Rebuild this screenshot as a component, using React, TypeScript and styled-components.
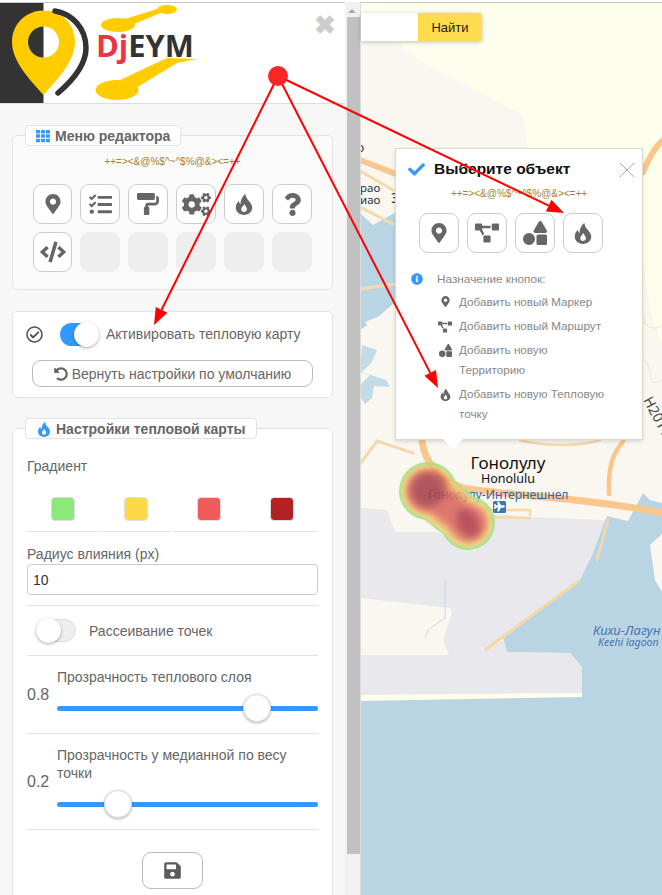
import React from "react";
import styled, { createGlobalStyle } from "styled-components";
import {
  FaMapMarkerAlt, FaTasks, FaPaintRoller, FaCogs, FaQuestion, FaCode, FaTh,
  FaUndoAlt, FaSave, FaCheck, FaInfoCircle, FaProjectDiagram, FaShapes, FaRegCheckCircle, FaPlane,
} from "react-icons/fa";

const Global = createGlobalStyle`
  html, body { margin: 0; padding: 0; background: #fff; }
  * { box-sizing: border-box; }
  body { font-family: "Liberation Sans", Arial, sans-serif; }
`;

const Page = styled.div`
  position: relative; width: 662px; height: 895px; overflow: hidden;
  display: flex; border-top: 2px solid #fff;
`;
const Panel = styled.aside`
  width: 345px; flex: none; background: #f7f7f7; border-top: 1px solid #c8c8c8;
  display: flex; flex-direction: column; color: #666;
`;
const Header = styled.header`
  position: relative; height: 101px; flex: none; background: #fff; border-bottom: 1px solid #ddd;
  display: flex;
`;
const CloseBig = styled.span`
  position: absolute; top: 10px; right: 9px; font: bold 26px/25px "Liberation Sans", sans-serif; color: #ccc;
`;
const Field = styled.fieldset`
  margin: 0 12px; padding: 0 14px; min-width: 0; width: 321px;
  border: 1px solid #e3e3e3; border-radius: 5px; background: #fafafa;
`;
const MenuField = styled(Field)`
  margin-top: 21px; height: 165px; flex: none;
`;
const Legend = styled.legend`
  margin-left: -2px; padding: 0 10px; height: 21px; background: #fff;
  border: 1px solid #e3e3e3; border-radius: 4px;
  display: flex; align-items: center; gap: 5px; white-space: nowrap;
  font-size: 14px; font-weight: bold; color: #666;
  svg { color: #3399ff; }
`;
const SettingsLegend = styled(Legend)`
  gap: 4px;
`;
const Symbols = styled.div`
  font-size: 10px; line-height: 12px; color: #a8822d; text-align: center; white-space: nowrap;
`;
const MenuSymbols = styled(Symbols)`
  margin: 10px 0 0; height: 28px;
`;
const ButtonGrid = styled.div`
  display: grid; grid-template-columns: 39px repeat(5, 40px); gap: 8px; margin: 0 0 0 6px;
`;
const IconButton = styled.button`
  width: 100%; height: 40px; padding: 0; background: #fff; border: 1px solid #ccc; border-radius: 9px;
  display: flex; align-items: center; justify-content: center; color: #666;
`;
const EmptyButton = styled.div`
  height: 40px; background: #eee; border-radius: 9px;
`;
const ActivateField = styled(Field)`
  margin-top: 21px; background: #fff; padding: 0 19px 10px; height: 87px; flex: none;
`;
const ActivateRow = styled.div`
  display: flex; align-items: center; height: 44px; color: #666; font-size: 14px;
  svg { color: #555; margin-left: -6px; }
`;
const Track = styled.span<{ $on?: boolean }>`
  position: relative; display: block; flex: none; height: 23px; border-radius: 12px;
  width: ${(p) => (p.$on ? "38px" : "40px")};
  background: ${(p) => (p.$on ? "#3399ff" : "#eee")};
  border: ${(p) => (p.$on ? "none" : "1px solid #ddd")};
`;
const Knob = styled.span<{ $on?: boolean }>`
  position: absolute; top: ${(p) => (p.$on ? "-1px" : "-2px")};
  ${(p) => (p.$on ? "right: -1px;" : "left: -1px;")}
  width: 25px; height: 25px; border-radius: 50%; background: #fff;
  box-shadow: 0 1px 3px rgba(0,0,0,.35);
`;
const ActivateLabel = styled.span`
  margin-left: 8px; white-space: nowrap;
`;
const ActivateTrack = styled(Track)`
  margin-left: 17px;
`;
const ResetButton = styled.button`
  display: flex; align-items: center; justify-content: center; gap: 4px;
  width: 281px; height: 27px; margin: 4px 0 0 0; padding: 0; background: #fff;
  border: 1px solid #bbb; border-radius: 9px; font: 14px "Liberation Sans", sans-serif; color: #666;
`;
const SettingsField = styled(Field)`
  margin-top: 20px; background: #fff; height: 560px; flex: none;
`;
const PlainLabel = styled.div`
  font-size: 14px; line-height: 20px; color: #666;
`;
const GradientLabel = styled(PlainLabel)`
  margin-top: 17px;
`;
const SwatchRow = styled.div`
  display: grid; grid-template-columns: repeat(4, 71px); gap: 2px;
`;
const SwatchCell = styled.div`
  display: flex; justify-content: center; padding: 21px 0 10px; border-bottom: 1px solid #e3e3e3;
`;
const Swatch = styled.span<{ $c: string }>`
  width: 24px; height: 24px; border-radius: 4px; background: ${(p) => p.$c}; border: 1px solid #ddd;
`;
const RadiusLabel = styled(PlainLabel)`
  margin-top: 13px; line-height: 19px;
`;
const RadiusInput = styled.input`
  display: block; width: 291px; height: 31px; padding: 0 5px; border: 1px solid #ccc; border-radius: 4px;
  font: 14px "Liberation Sans", sans-serif; color: #333; background: #fff;
`;
const ScatterRow = styled.div`
  display: flex; align-items: center; height: 51px; margin-top: 10px; padding: 0 0 0 9px; gap: 13px;
  border-top: 1px solid #e3e3e3; border-bottom: 1px solid #e3e3e3; font-size: 14px;
`;
const SliderRow = styled.div<{ $h: number }>`
  display: grid; grid-template-columns: 28px 261px; column-gap: 2px; height: ${(p) => p.$h}px;
`;
const SliderValue = styled.div`
  display: flex; align-items: center; border-bottom: 1px solid #e3e3e3; font-size: 16px; color: #666;
`;
const SliderMain = styled.div`
  border-bottom: 1px solid #e3e3e3; padding-top: 12px; font-size: 14px; line-height: 18px;
`;
const SliderTrack = styled.div<{ $mt: number }>`
  position: relative; height: 5px; margin-top: ${(p) => p.$mt}px; background: #3399ff; border-radius: 3px;
`;
const SliderThumb = styled.span<{ $x: number }>`
  position: absolute; top: -12px; left: ${(p) => p.$x - 14}px; width: 28px; height: 28px; border-radius: 50%;
  background: #fff; border: 1px solid #ddd; box-shadow: 0 1px 3px rgba(0,0,0,.3);
`;
const SaveRow = styled.div`
  display: flex; justify-content: center; margin-top: 22px;
`;
const SaveButton = styled.button`
  width: 61px; height: 37px; padding: 0; display: flex; align-items: center; justify-content: center;
  background: #fff; border: 1px solid #bbb; border-radius: 9px; color: #5c5c5c;
`;
const ScrollBar = styled.div`
  width: 15px; flex: none; background: #f1f1f1; padding: 15px 0 0 2px; position: relative;
`;
const ScrollThumb = styled.div`
  width: 13px; height: 837px; background: #c1c1c1;
`;
const ScrollArrow = styled.span`
  position: absolute; top: 7px; left: 3px; width: 0; height: 0;
  border-left: 4px solid transparent; border-right: 4px solid transparent; border-bottom: 4px solid #aaa;
`;
const MapArea = styled.main`
  position: relative; flex: 1; min-width: 0; border-left: 1px solid #ddd; border-top: 1px solid #c8c8c8; background: #fefeec;
`;
const MapSvg = styled.svg`
  display: block; position: absolute; left: 0; top: 0; font-family: "Noto Sans", sans-serif;
`;
const Search = styled.div`
  position: absolute; left: 0; top: 10px; display: flex; height: 28px; width: 121px;
  box-shadow: 0 1px 4px rgba(0,0,0,.25); border-radius: 0 3px 3px 0; overflow: hidden;
`;
const SearchInput = styled.div`
  flex: 1; background: #fff;
`;
const SearchBtn = styled.div`
  width: 64px; background: #ffdb4d; color: #222; font-size: 13px; display: flex; align-items: center; justify-content: center;
`;
const Popup = styled.section`
  position: absolute; left: 34px; top: 145px; width: 248px; height: 292px; background: #fff;
  border: 1px solid #ddd8c8; box-shadow: 0 2px 4px rgba(0,0,0,.12);
  &::after {
    content: ""; position: absolute; left: 47px; top: 100%; width: 0; height: 0;
    border-left: 10px solid transparent; border-right: 10px solid transparent; border-top: 10px solid #fff;
  }
`;
const PopupHead = styled.div`
  display: flex; align-items: center; height: 37px; padding: 3px 0 0 12px; gap: 9px;
  font-size: 15.5px; font-weight: bold; color: #111; white-space: nowrap;
  svg { color: #3399ff; }
`;
const PopupClose = styled.svg`
  position: absolute; top: 13px; right: 7px;
`;
const PopupSymbols = styled(Symbols)`
  margin-top: 2px; height: 25px;
`;
const PopupButtons = styled.div`
  display: grid; grid-template-columns: repeat(4, 40px); gap: 8px; margin: 0 0 0 23px;
`;
const InfoHead = styled.div`
  display: flex; align-items: center; margin: 18px 0 0 15px; height: 16px; gap: 14px;
  font-size: 11.800px; color: #888;
  svg { color: #3399ff; }
`;
const List = styled.ul`
  list-style: none; margin: 5px 0 0; padding: 0 35px 0 63px;
`;
const ListItem = styled.li`
  position: relative; font-size: 11.700px; line-height: 20px; color: #888; margin-bottom: 4px;
`;
const ListIcon = styled.span`
  position: absolute; left: -21px; top: 4px; width: 14px; display: flex; justify-content: center; color: #666;
`;
const Annotations = styled.svg`
  position: absolute; left: 0; top: -2px; pointer-events: none;
`;

const FlameIcon = ({ size = 20 }: { size?: number }) => (
  <svg width={size} height={size} viewBox="0 0 24 24" fill="currentColor">
    <path
      fillRule="evenodd"
      d="M13.500 1c.5 4 2.500 6 4.500 8.500 1.800 2.200 3 4.200 3 6.700 0 4.500-4 7.800-9 7.800s-9-3.300-9-7.800c0-3.200 1.400-5.700 3.500-7.700 0 1.800.5 3 1.800 3.700C8 9 9.500 4 13.500 1zM12.300 12c-.6 2-3.300 3.200-3.300 5.800 0 1.900 1.400 3 3 3s3.200-1.100 3.200-3c0-2.500-2.300-3.600-2.900-5.800z"
    />
  </svg>
);

const arrow = (x1: number, y1: number, x2: number, y2: number) => {
  const a = Math.atan2(y2 - y1, x2 - x1);
  const L = 17, W = 6.5;
  const bx = x2 - L * Math.cos(a), by = y2 - L * Math.sin(a);
  const nx = -Math.sin(a) * W, ny = Math.cos(a) * W;
  return (
    <g key={x2}>
      <line x1={x1} y1={y1} x2={bx} y2={by} stroke="#f00" strokeWidth="2" />
      <polygon points={`${x2},${y2} ${bx + nx},${by + ny} ${bx - nx},${by - ny}`} fill="#f00" />
    </g>
  );
};

const Logo = () => (
  <svg width="200" height="100" viewBox="0 3 200 100">
    <rect x="0" y="3" width="43.5" height="100" fill="#333" />
    <path d="M43.5 10.500C26 10.500 12 24 12 42c0 20 20 40 31.500 53C55 82 75 62 75 42c0-18-13-31.500-31.500-31.500z" fill="#fc0" />
    <circle cx="43.500" cy="42" r="15.500" fill="#fff" />
    <path d="M43.500 26.500a15.500 15.500 0 0 0 0 31z" fill="#333" />
    <path d="M55 11c17 3 31 17 31 37 0 18-14 33-28 45" fill="none" stroke="#333" strokeWidth="5.500" strokeLinecap="round" />
    <ellipse cx="118" cy="25" rx="17" ry="7" fill="#fc0" />
    <ellipse cx="167" cy="9.500" rx="10" ry="4.500" fill="#fc0" />
    <path d="M122 20l38-12 3 4-36 15z" fill="#fc0" />
    <ellipse cx="117" cy="90" rx="21.500" ry="10" fill="#fc0" />
    <path d="M120 80L167 58 197 59 177 63 136 88z" fill="#fc0" />
    <text x="96" y="57" fontFamily="Open Sans, sans-serif" fontWeight="700" fontSize="30" textLength="98" lengthAdjust="spacingAndGlyphs">
      <tspan fill="#ee3344">Dj</tspan><tspan fill="#333">EYM</tspan>
    </text>
  </svg>
);

const road = "#f9c68c";

const HeatLayer = ({ c, r1, r2, w, blur }: { c: string; r1: number; r2: number; w: number; blur?: string }) => (
  <g filter={blur}>
    <circle cx="68" cy="491" r={r1} fill={c} />
    <circle cx="108" cy="523" r={r2} fill={c} />
    <path d="M68 491L108 523" stroke={c} strokeWidth={w} fill="none" />
  </g>
);

const MapDrawing = () => (
  <MapSvg width="301" height="895" viewBox="1 3 301 895">
    <rect x="0" y="0" width="302" height="900" fill="#fefeec" />
    <path d="M0 42L37 42 58 60 163 115 168 150 280 250 292 316 302 345V600H0z" fill="#faf7f1" />
    <path d="M0 213L13 225 36 212 40 298 12 322 0 330z" fill="#b9d5e3" />
    <path d="M5 322L30 312 30 315 8 326z" fill="#faf7f1" />
    <path d="M2 345L17 350 12 362 2 372 26 380 30 387 14 386 12 398 5 404 0 396 0 385 10 375 0 372z" fill="#c3dbe7" />
    <path d="M0 508L27 510 35 532 77 532 115 552 123 513 170 517 247 520 233 553 220 580 125 650 143 640 147 652 210 653 222 667 222 693 0 695z" fill="#e8e8ed" />
    <path d="M0 598L90 608 92 613 83 640 89 655H0z" fill="#faf7f1" />
    <path d="M247 516L268 521 283 493 290 500 302 503V900H0V700L222 694 222 667 210 653 147 652 143 638 220 580 233 553z" fill="#b9d5e3" />
    <path d="M302 534L290 545 295 580 302 592z" fill="#faf7f1" />
    <path d="M0 695L222 693 222 697 0 701z" fill="#fffeea" />
    <path d="M125 650L220 580" stroke="#f3d9a3" strokeWidth="3" fill="none" />
    <path d="M85 580V618L68 630 65 638" stroke="#c3dbe7" strokeWidth="1" fill="none" />
    <g fill="none" strokeLinecap="round">
      <path d="M0 160L36 174" stroke={road} strokeWidth="6" />
      <path d="M0 171L33 190M0 207L33 224" stroke="#f6d9ae" strokeWidth="3" />
      <path d="M283 172C288 160 294 148 302 141" stroke={road} strokeWidth="6" />
      <path d="M0 289L36 284" stroke="#f6d9ae" strokeWidth="3" />
      <path d="M62 440C64 462 80 478 102 488C150 496 230 498 302 513" stroke={road} strokeWidth="7" />
      <path d="M264 440C255 452 248 460 249 494" stroke={road} strokeWidth="4.500" />
      <path d="M0 464L17 441 53 453" stroke="#f6d9ae" strokeWidth="3" />
      <path d="M120 510H170V515M248 520L237 560M125 510V517L170 518" stroke="#f8d8a4" strokeWidth="2.500" />
      <path d="M160 440C180 446 220 447 240 440" stroke="#f6d9ae" strokeWidth="2.500" />
      <path d="M285 316C280 330 300 330 302 325M285 360C295 370 285 390 302 380" stroke="#ece5d0" strokeWidth="1" />
    </g>
    <text x="-3" y="152" fontSize="12" fill="#333">о</text>
    <text x="0" y="192" fontSize="11.500" fill="#333">рао</text>
    <text x="0" y="204" fontSize="11.500" fill="#333">иао</text>
    <text x="31" y="203" fontSize="15" fill="#333">Э</text>
    <text x="148" y="469" textAnchor="middle" fontSize="17" fill="#111">Гонолулу</text>
    <text x="148" y="483" textAnchor="middle" fontSize="12.500" fill="#111">Honolulu</text>
    <text x="68" y="499" fontSize="12.200" fill="#2a67ad">Гонолулу-Интернешнел</text>
    <rect x="133" y="501" width="13" height="12" rx="1.500" fill="#3a78b8" />
    <g transform="translate(134 501)" color="#fff"><FaPlane size={11} /></g>
    <text x="233" y="635" fontSize="13" fontStyle="italic" fill="#4a72b0">Кихи-Лагун</text>
    <text x="238" y="646" fontSize="10.500" fontStyle="italic" fill="#4a72b0">Keehi lagoon</text>
    <text transform="translate(283 400) rotate(62)" fontSize="14" fill="#444">H2011</text>
    <g opacity="0.85">
      <HeatLayer c="#97e583" r1={29} r2={27} w={49} />
      <HeatLayer c="#f6e27a" r1={26} r2={24} w={45} blur="url(#b2)" />
      <HeatLayer c="#ef9f63" r1={23} r2={21} w={38} blur="url(#b3)" />
      <HeatLayer c="#d9625a" r1={20} r2={17} w={28} blur="url(#b3)" />
      <circle cx="68" cy="490" r="17" fill="#a63a45" filter="url(#b3)" />
      <ellipse cx="108" cy="523" rx="10" ry="15" transform="rotate(-30 108 523)" fill="#ac3944" filter="url(#b3)" />
    </g>
    <defs>
      <filter id="b2" x="-20%" y="-20%" width="140%" height="140%"><feGaussianBlur stdDeviation="1.500" /></filter>
      <filter id="b3" x="-50%" y="-50%" width="200%" height="200%"><feGaussianBlur stdDeviation="3.500" /></filter>
    </defs>
  </MapSvg>
);

const SYM = "++=><&@%$^~^$%@&><=++";

export default function App() {
  return (
    <Page>
      <Global />
      <Panel>
        <Header>
          <Logo />
          <CloseBig>✖</CloseBig>
        </Header>
        <MenuField>
          <Legend><FaTh size={14} />Меню редактора</Legend>
          <MenuSymbols>{SYM}</MenuSymbols>
          <ButtonGrid>
            <IconButton><FaMapMarkerAlt size={20} /></IconButton>
            <IconButton><FaTasks size={23} /></IconButton>
            <IconButton><FaPaintRoller size={22} /></IconButton>
            <IconButton><FaCogs size={29} /></IconButton>
            <IconButton><FlameIcon size={22} /></IconButton>
            <IconButton><FaQuestion size={23} /></IconButton>
            <IconButton><FaCode size={26} /></IconButton>
            <EmptyButton /><EmptyButton /><EmptyButton /><EmptyButton /><EmptyButton />
          </ButtonGrid>
        </MenuField>
        <ActivateField>
          <ActivateRow>
            <FaRegCheckCircle size={17} />
            <ActivateTrack $on><Knob $on /></ActivateTrack>
            <ActivateLabel>Активировать тепловую карту</ActivateLabel>
          </ActivateRow>
          <ResetButton><FaUndoAlt size={14} />Вернуть настройки по умолчанию</ResetButton>
        </ActivateField>
        <SettingsField>
          <SettingsLegend><FlameIcon size={16} />Настройки тепловой карты</SettingsLegend>
          <GradientLabel>Градиент</GradientLabel>
          <SwatchRow>
            {["#8ce878", "#ffd94a", "#f05a58", "#b22222"].map((c) => (
              <SwatchCell key={c}><Swatch $c={c} /></SwatchCell>
            ))}
          </SwatchRow>
          <RadiusLabel>Радиус влияния (px)</RadiusLabel>
          <RadiusInput defaultValue="10" />
          <ScatterRow>
            <Track><Knob /></Track>
            Рассеивание точек
          </ScatterRow>
          <SliderRow $h={78}>
            <SliderValue>0.8</SliderValue>
            <SliderMain>
              Прозрачность теплового слоя
              <SliderTrack $mt={20}><SliderThumb $x={200} /></SliderTrack>
            </SliderMain>
          </SliderRow>
          <SliderRow $h={96}>
            <SliderValue>0.2</SliderValue>
            <SliderMain>
              Прозрачность у медианной по весу точки
              <SliderTrack $mt={20}><SliderThumb $x={61} /></SliderTrack>
            </SliderMain>
          </SliderRow>
          <SaveRow><SaveButton><FaSave size={19} /></SaveButton></SaveRow>
        </SettingsField>
      </Panel>
      <ScrollBar><ScrollArrow /><ScrollThumb /></ScrollBar>
      <MapArea>
        <MapDrawing />
        <Search><SearchInput /><SearchBtn>Найти</SearchBtn></Search>
        <Popup>
          <PopupHead><FaCheck size={17} />Выберите объект</PopupHead>
          <PopupClose width="16" height="16" viewBox="0 0 16 16"><path d="M1 1L15 15M15 1L1 15" stroke="#aaa" strokeWidth="1" fill="none" /></PopupClose>
          <PopupSymbols>{SYM}</PopupSymbols>
          <PopupButtons>
            <IconButton><FaMapMarkerAlt size={20} /></IconButton>
            <IconButton><FaProjectDiagram size={24} /></IconButton>
            <IconButton><FaShapes size={24} /></IconButton>
            <IconButton><FlameIcon size={22} /></IconButton>
          </PopupButtons>
          <InfoHead><FaInfoCircle size={12} />Назначение кнопок:</InfoHead>
          <List>
            <ListItem><ListIcon><FaMapMarkerAlt size={11} /></ListIcon>Добавить новый Маркер</ListItem>
            <ListItem><ListIcon><FaProjectDiagram size={14} /></ListIcon>Добавить новый Маршрут</ListItem>
            <ListItem><ListIcon><FaShapes size={13} /></ListIcon>Добавить новую Территорию</ListItem>
            <ListItem><ListIcon><FlameIcon size={13} /></ListIcon>Добавить новую Тепловую точку</ListItem>
          </List>
        </Popup>
      </MapArea>
      <Annotations width="662" height="895" viewBox="0 0 662 895">
        {arrow(278, 76, 154, 325)}
        {arrow(278, 76, 564, 213)}
        {arrow(278, 76, 438, 388)}
        <circle cx="278" cy="76" r="10" fill="#fd2626" />
      </Annotations>
    </Page>
  );
}
